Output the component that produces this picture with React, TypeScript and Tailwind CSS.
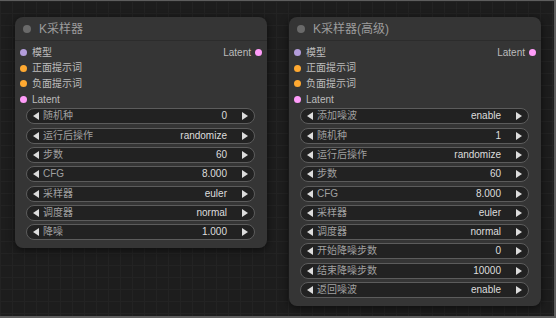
type Slot = { label: string; color: string };
type Widget = { label: string; value: string };

const inputs: Slot[] = [
  { label: '模型', color: 'bg-[#b39ddb]' },
  { label: '正面提示词', color: 'bg-[#ffa931]' },
  { label: '负面提示词', color: 'bg-[#ffa931]' },
  { label: 'Latent', color: 'bg-[#ff9cf9]' },
];

const basicWidgets: Widget[] = [
  { label: '随机种', value: '0' },
  { label: '运行后操作', value: 'randomize' },
  { label: '步数', value: '60' },
  { label: 'CFG', value: '8.000' },
  { label: '采样器', value: 'euler' },
  { label: '调度器', value: 'normal' },
  { label: '降噪', value: '1.000' },
];

const advancedWidgets: Widget[] = [
  { label: '添加噪波', value: 'enable' },
  { label: '随机种', value: '1' },
  { label: '运行后操作', value: 'randomize' },
  { label: '步数', value: '60' },
  { label: 'CFG', value: '8.000' },
  { label: '采样器', value: 'euler' },
  { label: '调度器', value: 'normal' },
  { label: '开始降噪步数', value: '0' },
  { label: '结束降噪步数', value: '10000' },
  { label: '返回噪波', value: 'enable' },
];

const WidgetRow = ({ label, value }: Widget) => (
  <div className="flex h-[16px] items-center rounded-full border border-[#5c5c5c] bg-[#222222] text-[10px] leading-none">
    <span className="ml-[6px] h-0 w-0 border-y-[4px] border-r-[6px] border-y-transparent border-r-[#dddddd]" />
    <span className="ml-[4px] text-[#a0a0a0]">{label}</span>
    <span className="ml-auto text-[#dddddd]">{value}</span>
    <span className="mr-[6px] ml-[15px] h-0 w-0 border-y-[4px] border-l-[6px] border-y-transparent border-l-[#dddddd]" />
  </div>
);

const Node = ({ title, widgets }: { title: string; widgets: Widget[] }) => (
  <div className="w-[252px] rounded-[8px] bg-[#353535] shadow-[0_2px_8px_rgba(0,0,0,0.6)]">
    <div className="flex h-[24px] items-center border-b border-[#2c2c2c] pl-[8px]">
      <span className="h-[8px] w-[8px] rounded-full bg-[#6a6a6a]" />
      <span className="ml-[8px] text-[12px] text-[#9c9c9c]">{title}</span>
    </div>
    <div className="pt-[4px]">
      {inputs.map((slot, i) => (
        <div key={slot.label} className="flex h-[15.6px] items-center pl-[5px] pr-[5px] text-[10px] leading-none">
          <span className={`h-[7px] w-[7px] rounded-full ${slot.color}`} />
          <span className="ml-[5px] text-[#bcbcbc]">{slot.label}</span>
          {i === 0 && (
            <>
              <span className="ml-auto text-[#bcbcbc]">Latent</span>
              <span className="ml-[4px] h-[7px] w-[7px] rounded-full bg-[#ff9cf9]" />
            </>
          )}
        </div>
      ))}
    </div>
    <div className="flex flex-col gap-[3.3px] pt-[1px] pr-[12px] pb-[8px] pl-[11px]">
      {widgets.map((w) => (
        <WidgetRow key={w.label} {...w} />
      ))}
    </div>
  </div>
);

export default function App() {
  return (
    <div
      className="h-[318px] w-[556px] overflow-hidden border-t border-r-2 border-b-2 border-[#5e5e5e] bg-[#1d1d1d] bg-[linear-gradient(#232323_1px,transparent_1px),linear-gradient(90deg,#232323_1px,transparent_1px)] bg-[size:12px_12px] pt-[16px] pl-[15px]"
      style={{ fontFamily: '"Liberation Sans", "Noto Sans CJK SC", sans-serif' }}
    >
      <div className="flex items-start gap-[22px]">
        <Node title="K采样器" widgets={basicWidgets} />
        <Node title="K采样器(高级)" widgets={advancedWidgets} />
      </div>
    </div>
  );
}
